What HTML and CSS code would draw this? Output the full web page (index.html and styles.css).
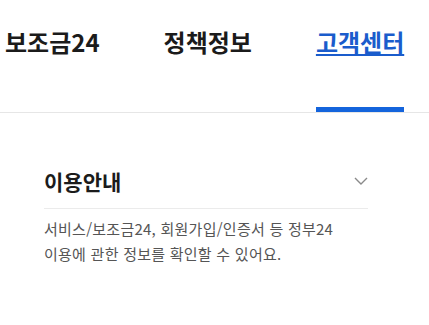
FILE: index.html
```html
<!DOCTYPE html>
<html lang="ko">
<head>
<meta charset="utf-8">
<link rel="stylesheet" href="styles.css">
</head>
<body>
<header class="gnb">
  <nav class="gnb-list">
    <a class="gnb-item">보조금24</a>
    <a class="gnb-item">정책정보</a>
    <a class="gnb-item active">고객센터</a>
  </nav>
</header>
<main class="content">
  <section class="acc">
    <div class="acc-head">
      <h2 class="acc-title">이용안내</h2>
      <svg class="chev" width="14" height="8" viewBox="0 0 14 8"><path d="M1 1 L7 7 L13 1" fill="none" stroke="#8a8a8a" stroke-width="1.4"/></svg>
    </div>
    <p class="acc-desc">서비스/보조금24, 회원가입/인증서 등 정부24<br>이용에 관한 정보를 확인할 수 있어요.</p>
  </section>
</main>
</body>
</html>
```
FILE: styles.css
```css
* { box-sizing: border-box; }
html, body { margin: 0; padding: 0; background: #fff; }
body { font-family: "Noto Sans CJK KR", "Noto Sans", sans-serif; color: #111; overflow: hidden; }
.gnb { border-bottom: 1px solid #e6e6e6; }
.gnb-list { display: flex; gap: 64px; padding-left: 5px; white-space: nowrap; }
.gnb-item {
  font-size: 24px; font-weight: 700; line-height: 32px;
  padding: 26px 0 49px; color: #1b1b1b; border-bottom: 5px solid transparent;
  letter-spacing: 0;
}
.gnb-item.active { color: #1a5ccc; text-decoration: underline; text-underline-offset: 2px; text-decoration-thickness: 2px; border-bottom-color: #1464dc; }
.content { padding: 53px 61px 0 44px; }
.acc-head { display: flex; align-items: center; justify-content: space-between; border-bottom: 1px solid #ebebeb; padding: 0 0 12px; }
.acc-title { margin: 0; font-size: 21px; font-weight: 700; line-height: 30px; color: #1b1b1b; }
.acc-desc { margin: 7px 0 0; font-size: 15px; line-height: 25px; color: #555; letter-spacing: 0.25px; }
```
